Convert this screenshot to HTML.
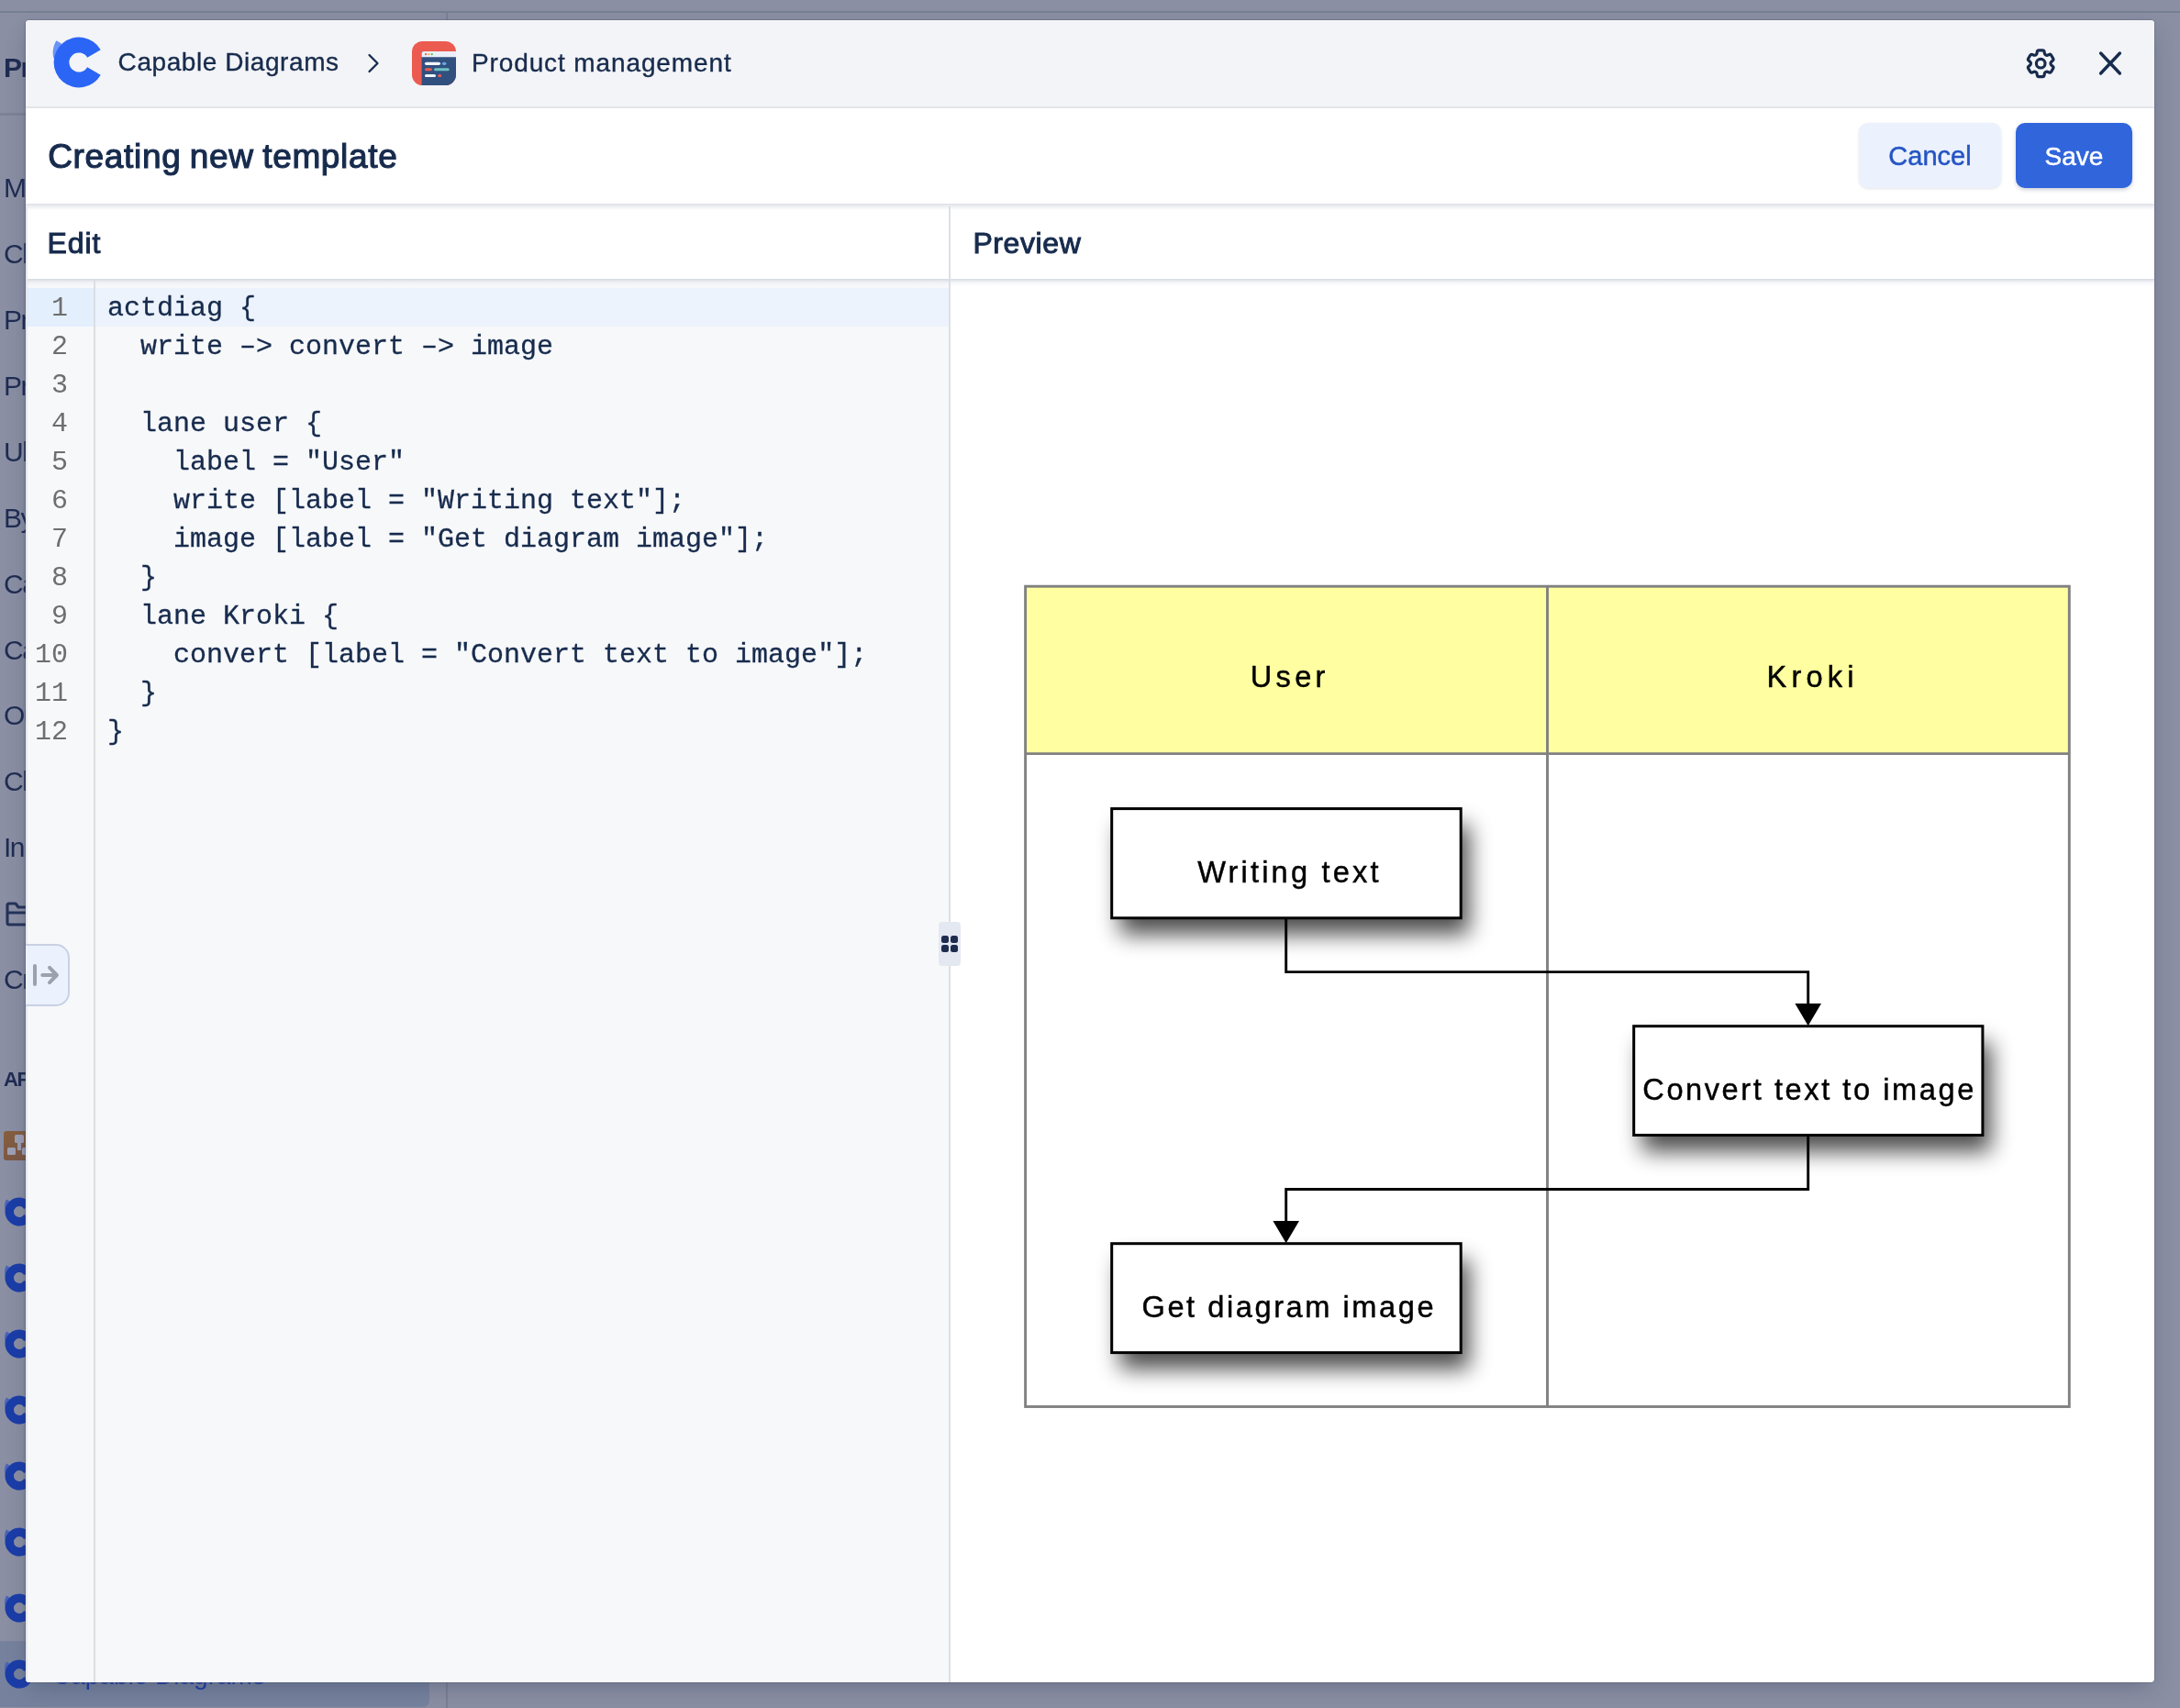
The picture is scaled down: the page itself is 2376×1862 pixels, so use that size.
<!DOCTYPE html>
<html>
<head>
<meta charset="utf-8">
<title>Creating new template</title>
<style>
*{box-sizing:border-box;margin:0;padding:0}
html,body{width:2376px;height:1862px;overflow:hidden}
body{position:relative;background:#8a8fa3;font-family:"Liberation Sans",sans-serif;color:#172b4d}
.abs{position:absolute}
.t{position:absolute;white-space:nowrap;line-height:1}
#bgmain{left:487px;top:0;width:1889px;height:1862px;background:#8a8fa3}
#bgtopline{left:0;top:12px;width:2376px;height:2px;background:#777f94}
#bgdiv{left:486px;top:14px;width:2px;height:1848px;background:#7a8095}
#bghline{left:0;top:123px;width:486px;height:3px;background:#7d8498}
#bgsel{left:-10px;top:1789px;width:478px;height:72px;border-radius:7px;background:#76829d}
.sb{color:#1f2c52;font-size:30px;left:4px;letter-spacing:-1.5px}
#content,#sidebar{will-change:transform}
#modal{left:28px;top:22px;width:2320px;height:1812px;border-radius:4px;background:#fff;overflow:hidden;box-shadow:0 0 0 1px rgba(70,78,104,.3),0 9px 24px -5px rgba(35,45,80,.32),-2px 0 5px -2px rgba(35,45,80,.12)}
#hdr{left:0;top:0;width:2320px;height:96px;background:#f3f4f7;border-bottom:2px solid #e2e4e9}
#titlebar{left:0;top:96px;width:2320px;height:104px;background:#fff}
#tshadow{left:0;top:200px;width:2320px;height:7px;background:linear-gradient(#dde0e7,#eef0f3 45%,#fff)}
#eshadow{left:0;top:282px;width:2320px;height:8px;background:linear-gradient(rgba(200,205,216,.75),rgba(225,228,235,.4) 45%,rgba(255,255,255,0))}
#lborder{left:0;top:203px;width:2px;height:1609px;background:#e6e8ec}
#panehdr{left:0;top:207px;width:2320px;height:75px;background:#fff}
#editor{left:0;top:282px;width:1006px;height:1530px;background:#f7f8fa}
#gutterline{left:74px;top:284px;width:2px;height:1528px;background:#dcdee3}
#activeline{left:0;top:292px;width:1006px;height:42px;background:#ecf3fc}
#activegut{left:0;top:292px;width:74px;height:42px;background:#e3effd}
#split{left:1006px;top:203px;width:2px;height:1609px;background:#dcdfe6}
#handle{left:995px;top:983px;width:24px;height:48px;border-radius:4px;background:#e3e8f1}
.dot{position:absolute;width:8px;height:8px;border-radius:2.5px;background:#1c2b4e}
.ln{position:absolute;left:0;width:46px;text-align:right;font-family:"Liberation Mono",monospace;font-size:30px;line-height:42px;color:#6e6e6e;white-space:pre}
.cl{-webkit-text-stroke:0.3px #172b4d;position:absolute;left:89px;font-family:"Liberation Mono",monospace;font-size:30px;line-height:42px;color:#172b4d;white-space:pre}
.btn{position:absolute;height:71px;border-radius:10px;text-align:center;line-height:71px;white-space:nowrap}
#collapse{left:-2px;top:1007px;width:50px;height:68px;border:2px solid #c8d1e3;border-radius:0 15px 15px 0;background:#ecf2fd}
</style>
</head>
<body>
<div id="bgmain" class="abs"></div>
<div id="bgtopline" class="abs"></div>
<div id="bgdiv" class="abs"></div>
<div id="bghline" class="abs"></div>
<div id="bgsel" class="abs"></div>
<div id="sidebar">
<div class="t sb" style="top:59px;font-size:30px;font-weight:bold;">Pr</div>
<div class="t sb" style="top:190px;font-size:30px;">M</div>
<div class="t sb" style="top:262px;font-size:30px;">Cl</div>
<div class="t sb" style="top:334px;font-size:30px;">Pr</div>
<div class="t sb" style="top:406px;font-size:30px;">Pr</div>
<div class="t sb" style="top:478px;font-size:30px;">Ul</div>
<div class="t sb" style="top:550px;font-size:30px;">By</div>
<div class="t sb" style="top:622px;font-size:30px;">Ca</div>
<div class="t sb" style="top:694px;font-size:30px;">Ca</div>
<div class="t sb" style="top:765px;font-size:30px;">Ou</div>
<div class="t sb" style="top:837px;font-size:30px;">Cl</div>
<div class="t sb" style="top:909px;font-size:30px;">In</div>
<div class="t sb" style="top:1053px;font-size:30px;">Cr</div>
<div class="t sb" style="top:1166px;font-size:22px;font-weight:bold;">AP</div>
<svg class="abs" style="left:6px;top:982px" width="30" height="28" viewBox="0 0 30 28" fill="none" stroke="#26345a" stroke-width="3.1" stroke-linejoin="round" stroke-linecap="round"><path d="M2 24V5a2 2 0 0 1 2-2h7l3 4h14v17a2 2 0 0 1-2 2H4a2 2 0 0 1-2-2z M2 13h26"/></svg>
<div class="abs" style="left:4px;top:1233px;width:32px;height:32px;border-radius:3px;background:linear-gradient(160deg,#86603f,#7a5646)"></div>
<svg class="abs" style="left:4px;top:1233px" width="32" height="32" viewBox="0 0 32 32" fill="#9ea0b4"><rect x="12" y="4" width="10" height="9" rx="1.5"/><rect x="4" y="18" width="9" height="8" rx="1.5"/><rect x="20" y="18" width="9" height="8" rx="1.5"/><path d="M15 13h4v8h-4z"/></svg>
<svg class="abs" style="left:1px;top:1300.8px" width="40" height="40" viewBox="-20 -20 40 40"><path d="M-14,-13.5 L-10.5,-11.5 L-15.4,-2 C-16.5,-6 -16.2,-10 -14,-13.5Z" fill="#4a64b8"/><path d="M13.4,-7.75 A15.5,15.5 0 1 0 13.4,7.75 L5.2,3 A6,6 0 1 1 5.2,-3 Z" fill="#1b3da8"/></svg>
<svg class="abs" style="left:1px;top:1372.8px" width="40" height="40" viewBox="-20 -20 40 40"><path d="M-14,-13.5 L-10.5,-11.5 L-15.4,-2 C-16.5,-6 -16.2,-10 -14,-13.5Z" fill="#4a64b8"/><path d="M13.4,-7.75 A15.5,15.5 0 1 0 13.4,7.75 L5.2,3 A6,6 0 1 1 5.2,-3 Z" fill="#1b3da8"/></svg>
<svg class="abs" style="left:1px;top:1444.8px" width="40" height="40" viewBox="-20 -20 40 40"><path d="M-14,-13.5 L-10.5,-11.5 L-15.4,-2 C-16.5,-6 -16.2,-10 -14,-13.5Z" fill="#4a64b8"/><path d="M13.4,-7.75 A15.5,15.5 0 1 0 13.4,7.75 L5.2,3 A6,6 0 1 1 5.2,-3 Z" fill="#1b3da8"/></svg>
<svg class="abs" style="left:1px;top:1516.8px" width="40" height="40" viewBox="-20 -20 40 40"><path d="M-14,-13.5 L-10.5,-11.5 L-15.4,-2 C-16.5,-6 -16.2,-10 -14,-13.5Z" fill="#4a64b8"/><path d="M13.4,-7.75 A15.5,15.5 0 1 0 13.4,7.75 L5.2,3 A6,6 0 1 1 5.2,-3 Z" fill="#1b3da8"/></svg>
<svg class="abs" style="left:1px;top:1588.8px" width="40" height="40" viewBox="-20 -20 40 40"><path d="M-14,-13.5 L-10.5,-11.5 L-15.4,-2 C-16.5,-6 -16.2,-10 -14,-13.5Z" fill="#4a64b8"/><path d="M13.4,-7.75 A15.5,15.5 0 1 0 13.4,7.75 L5.2,3 A6,6 0 1 1 5.2,-3 Z" fill="#1b3da8"/></svg>
<svg class="abs" style="left:1px;top:1660.8px" width="40" height="40" viewBox="-20 -20 40 40"><path d="M-14,-13.5 L-10.5,-11.5 L-15.4,-2 C-16.5,-6 -16.2,-10 -14,-13.5Z" fill="#4a64b8"/><path d="M13.4,-7.75 A15.5,15.5 0 1 0 13.4,7.75 L5.2,3 A6,6 0 1 1 5.2,-3 Z" fill="#1b3da8"/></svg>
<svg class="abs" style="left:1px;top:1732.8px" width="40" height="40" viewBox="-20 -20 40 40"><path d="M-14,-13.5 L-10.5,-11.5 L-15.4,-2 C-16.5,-6 -16.2,-10 -14,-13.5Z" fill="#4a64b8"/><path d="M13.4,-7.75 A15.5,15.5 0 1 0 13.4,7.75 L5.2,3 A6,6 0 1 1 5.2,-3 Z" fill="#1b3da8"/></svg>
<svg class="abs" style="left:1px;top:1804.8px" width="40" height="40" viewBox="-20 -20 40 40"><path d="M-14,-13.5 L-10.5,-11.5 L-15.4,-2 C-16.5,-6 -16.2,-10 -14,-13.5Z" fill="#4a64b8"/><path d="M13.4,-7.75 A15.5,15.5 0 1 0 13.4,7.75 L5.2,3 A6,6 0 1 1 5.2,-3 Z" fill="#1b3da8"/></svg>
<div class="t" style="left:57px;top:1812.8px;font-size:28px;color:#1f3fa6">Capable Diagrams</div>
</div>
<div id="modal" class="abs">
  <div id="hdr" class="abs"></div>
  <div id="titlebar" class="abs"></div>
  <div id="editor" class="abs"></div>
  <div id="activeline" class="abs"></div>
  <div id="activegut" class="abs"></div>
  <div id="gutterline" class="abs"></div>
  <div id="panehdr" class="abs"></div>
  <div id="tshadow" class="abs"></div>
  <div id="eshadow" class="abs"></div>
  <div id="lborder" class="abs"></div>
  <div id="split" class="abs"></div>
  <div id="handle" class="abs">
    <div class="dot" style="left:3px;top:15px"></div><div class="dot" style="left:13px;top:15px"></div>
    <div class="dot" style="left:3px;top:25px"></div><div class="dot" style="left:13px;top:25px"></div>
  </div>
  <div id="collapse" class="abs"></div>
  <div id="content">
<svg id="diagram" class="abs" style="left:-28px;top:-22px" width="2376" height="1862" viewBox="0 0 2376 1862">
<defs><filter id="fb" x="-0.2" y="-0.6" width="1.4" height="2.2"><feGaussianBlur stdDeviation="12.4"/></filter></defs>
<rect x="1117.6" y="639.2" width="1137.7" height="182.4" fill="#ffffa1"/>
<g fill="#000" opacity="0.7" filter="url(#fb)">
<rect x="1220.6" y="899.4" width="380.5" height="119.2"/>
<rect x="1789.6" y="1136.5" width="380.2" height="118.8"/>
<rect x="1220.6" y="1373.5" width="380.5" height="118.9"/>
</g>
<g fill="none" stroke="#818181" stroke-width="2.9">
<rect x="1117.6" y="639.2" width="1137.7" height="894.3"/>
<path d="M1686.5,639.2V1533.5 M1117.6,821.6H2255.3"/>
</g>
<g fill="none" stroke="#000" stroke-width="2.9">
<path d="M1401.7,1001V1059.6H1970.7V1096"/>
<path d="M1970.7,1238V1296.5H1401.7V1333"/>
</g>
<path d="M1956.4,1093.9H1985L1970.7,1118.2z M1387.4,1331H1416L1401.7,1355.3z" fill="#000"/>
<g fill="#fff" stroke="#000" stroke-width="3">
<rect x="1211.7" y="881.6" width="380.5" height="119.2"/>
<rect x="1780.7" y="1118.7" width="380.2" height="118.8"/>
<rect x="1211.7" y="1355.7" width="380.5" height="118.9"/>
</g>
<g font-family="Liberation Sans, sans-serif" font-size="32.6" fill="#000" stroke="#000" stroke-width="0.45" text-anchor="middle">
<text x="1403.6" y="749.3" textLength="81.5" lengthAdjust="spacing">User</text>
<text x="1973" y="749.3" textLength="95" lengthAdjust="spacing">Kroki</text>
<text x="1403.8" y="962.2" textLength="197.3" lengthAdjust="spacing">Writing text</text>
<text x="1970.8" y="1199" textLength="361" lengthAdjust="spacing">Convert text to image</text>
<text x="1403.5" y="1436" textLength="318" lengthAdjust="spacing">Get diagram image</text>
</g>
</svg>
<svg class="abs" style="left:26.1px;top:13.7px" width="64" height="64" viewBox="-32 -32 64 64"><path d="M-24.6,-23.8 L-19,-20.5 L-20,-10 L-27.3,-4 C-29.2,-10 -28.6,-17 -24.6,-23.8Z" fill="#6a93f6"/><path d="M23.73,-13.70 A27.4,27.4 0 1 0 23.73,13.70 L9.18,5.30 A10.6,10.6 0 1 1 9.18,-5.30 Z" fill="#2b65f6"/></svg>
<div class="t" style="left:100.6px;top:32.4px;font-size:28px;letter-spacing:0.57px;-webkit-text-stroke:0.35px #172b4d;">Capable Diagrams</div>
<svg class="abs" style="left:366.7px;top:33.0px" width="24" height="28" viewBox="-12 -14 24 28" fill="none" stroke="#172b4d" stroke-width="2.3" stroke-linecap="round" stroke-linejoin="round"><path d="M-4.5,-9 L4.5,0 L-4.5,9"/></svg>
<svg class="abs" style="left:421px;top:22.8px" width="48" height="48" viewBox="0 0 48 48">
<defs><clipPath id="pi"><rect x="0" y="0" width="48" height="48" rx="11.5"/></clipPath></defs>
<g clip-path="url(#pi)"><rect width="48" height="48" fill="#ec5b50"/>
<path d="M10.6,48V13.3a2.3,2.3 0 0 1 2.3,-2.3H48V48z" fill="#31507f"/>
<path d="M10.6,17.3V13.3a2.3,2.3 0 0 1 2.3,-2.3H48V17.3z" fill="#e9eef8"/>
<circle cx="15.1" cy="14.2" r="1.1" fill="#ec5b50"/><circle cx="18.4" cy="14.2" r="1.1" fill="#f0b63c"/><circle cx="21.7" cy="14.2" r="1.1" fill="#4bc444"/>
<rect x="14" y="22.7" width="17" height="3.2" rx="1.6" fill="#f2f5fa"/><rect x="33" y="22.7" width="4.4" height="3.2" rx="1.6" fill="#6aa8e0"/>
<rect x="14" y="29.2" width="7.9" height="3" rx="1.5" fill="#ec5b50"/><rect x="24" y="29.2" width="16.7" height="3" rx="1.5" fill="#6dc4c4"/>
<rect x="14" y="35.9" width="12" height="3.1" rx="1.55" fill="#f2f5fa"/><rect x="28.3" y="35.9" width="3.9" height="3.1" rx="1.55" fill="#ec5b50"/>
</g></svg>
<div class="t" style="left:486.0px;top:32.6px;font-size:28px;letter-spacing:0.88px;-webkit-text-stroke:0.35px #172b4d;">Product management</div>
<svg class="abs" style="left:2176.8px;top:27.7px" width="38.4" height="38.4" viewBox="0 0 24 24" fill="none" stroke="#172b4d" stroke-width="2" stroke-linecap="round" stroke-linejoin="round"><path d="M9.594 3.94c.09-.542.56-.94 1.11-.94h2.593c.55 0 1.02.398 1.11.94l.213 1.281c.063.374.313.686.645.87.074.04.147.083.22.127.325.196.72.257 1.075.124l1.217-.456a1.125 1.125 0 0 1 1.37.49l1.296 2.247a1.125 1.125 0 0 1-.26 1.431l-1.003.827c-.293.241-.438.613-.43.992a7.723 7.723 0 0 1 0 .255c-.008.378.137.75.43.991l1.004.827c.424.35.534.955.26 1.43l-1.298 2.247a1.125 1.125 0 0 1-1.369.491l-1.217-.456c-.355-.133-.75-.072-1.076.124a6.47 6.47 0 0 1-.22.128c-.331.183-.581.495-.644.869l-.213 1.281c-.09.543-.56.94-1.11.94h-2.594c-.55 0-1.019-.398-1.11-.94l-.213-1.281c-.062-.374-.312-.686-.644-.87a6.52 6.52 0 0 1-.22-.127c-.325-.196-.72-.257-1.076-.124l-1.217.456a1.125 1.125 0 0 1-1.369-.49l-1.297-2.247a1.125 1.125 0 0 1 .26-1.431l1.004-.827c.292-.24.437-.613.43-.991a6.932 6.932 0 0 1 0-.255c.007-.38-.138-.751-.43-.992l-1.004-.827a1.125 1.125 0 0 1-.26-1.43l1.297-2.247a1.125 1.125 0 0 1 1.37-.491l1.216.456c.356.133.751.072 1.076-.124.072-.044.146-.086.22-.128.332-.183.582-.495.644-.869l.214-1.28Z"/><path d="M15 12a3 3 0 1 1-6 0 3 3 0 0 1 6 0Z"/></svg>
<svg class="abs" style="left:2256px;top:30.9px" width="32" height="32" viewBox="-16 -16 32 32" fill="none" stroke="#172b4d" stroke-width="3.4" stroke-linecap="round"><path d="M-10.4,-11 L10.4,11 M10.4,-11 L-10.4,11"/></svg>
<div class="t" style="left:24.2px;top:130.3px;font-size:37px;-webkit-text-stroke:1.15px #172b4d;letter-spacing:0.67px;word-spacing:-1.5px;">Creating new template</div>
<div class="btn" style="left:1998px;top:112px;width:155px;background:#ebf1fd;color:#2455c4;-webkit-text-stroke:0.5px #2455c4;font-size:29px;line-height:73px;box-shadow:0 1px 3px rgba(23,43,77,.12)">Cancel</div>
<div class="btn" style="left:2169px;top:112px;width:127px;background:#3065dc;color:#fff;-webkit-text-stroke:0.5px #fff;font-size:28px;line-height:73px;box-shadow:0 2px 4px rgba(23,43,77,.22)">Save</div>
<div class="t" style="left:23.6px;top:226.9px;font-size:32px;-webkit-text-stroke:1px #172b4d;letter-spacing:0.9px;">Edit</div>
<div class="t" style="left:1032.4px;top:226.9px;font-size:32px;-webkit-text-stroke:1px #172b4d;letter-spacing:0.6px;">Preview</div>
<svg class="abs" style="left:8px;top:1027px" width="32" height="28" viewBox="0 0 32 28" fill="none" stroke="#9ca2ad" stroke-width="4" stroke-linecap="round" stroke-linejoin="round"><path d="M2,4 V24 M10.3,14 H25.9 M18,5.9 L25.9,14 L18,22.1"/></svg>
<div class="ln" style="top:293px">1</div><div class="cl" style="top:293px">actdiag {</div>
<div class="ln" style="top:335px">2</div><div class="cl" style="top:335px">  write –&gt; convert –&gt; image</div>
<div class="ln" style="top:377px">3</div><div class="cl" style="top:377px"></div>
<div class="ln" style="top:419px">4</div><div class="cl" style="top:419px">  lane user {</div>
<div class="ln" style="top:461px">5</div><div class="cl" style="top:461px">    label = "User"</div>
<div class="ln" style="top:503px">6</div><div class="cl" style="top:503px">    write [label = "Writing text"];</div>
<div class="ln" style="top:545px">7</div><div class="cl" style="top:545px">    image [label = "Get diagram image"];</div>
<div class="ln" style="top:587px">8</div><div class="cl" style="top:587px">  }</div>
<div class="ln" style="top:629px">9</div><div class="cl" style="top:629px">  lane Kroki {</div>
<div class="ln" style="top:671px">10</div><div class="cl" style="top:671px">    convert [label = "Convert text to image"];</div>
<div class="ln" style="top:713px">11</div><div class="cl" style="top:713px">  }</div>
<div class="ln" style="top:755px">12</div><div class="cl" style="top:755px">}</div>
  </div>
</div>
</body>
</html>
